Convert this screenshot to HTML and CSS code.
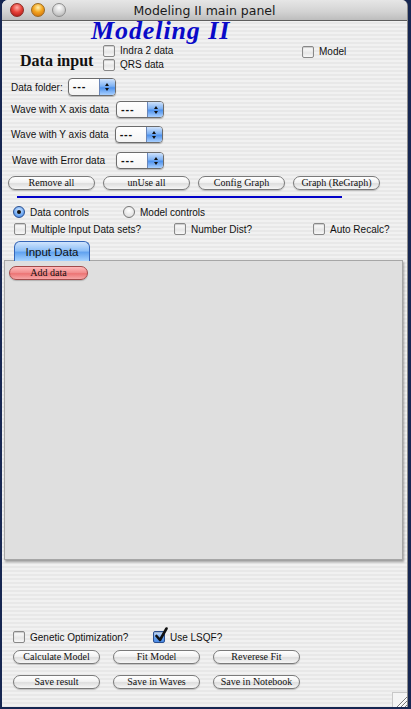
FILE: index.html
```html
<!DOCTYPE html>
<html>
<head>
<meta charset="utf-8">
<title>Modeling II main panel</title>
<link rel="stylesheet" href="styles.css">
</head>
<body>
<div class="win">
  <div class="titlebar">
    <div class="lights">
      <span class="light red"></span>
      <span class="light yellow"></span>
      <span class="light gray"></span>
    </div>
    <div class="title">Modeling II main panel</div>
  </div>

  <div class="content">
    <div class="heading">Modeling II</div>

    <div class="data-input">
      <div class="di-label">Data input</div>
      <div class="di-checks">
        <div class="cb"><span class="box"></span><span>Indra 2 data</span></div>
        <div class="cb"><span class="box"></span><span>QRS data</span></div>
      </div>
      <div class="cb model"><span class="box"></span><span>Model</span></div>
    </div>

    <div class="prow folder">
      <span class="plabel">Data folder:</span>
      <div class="popup"><span class="ptext">---</span><span class="parrows"><i class="up"></i><i class="down"></i></span></div>
    </div>
    <div class="prow xrow">
      <span class="plabel">Wave with X axis data</span>
      <div class="popup"><span class="ptext">---</span><span class="parrows"><i class="up"></i><i class="down"></i></span></div>
    </div>
    <div class="prow yrow">
      <span class="plabel">Wave with Y axis data</span>
      <div class="popup"><span class="ptext">---</span><span class="parrows"><i class="up"></i><i class="down"></i></span></div>
    </div>
    <div class="prow erow">
      <span class="plabel">Wave with Error data</span>
      <div class="popup"><span class="ptext">---</span><span class="parrows"><i class="up"></i><i class="down"></i></span></div>
    </div>

    <div class="btnrow top">
      <button class="btn">Remove all</button>
      <button class="btn">unUse all</button>
      <button class="btn">Config Graph</button>
      <button class="btn">Graph (ReGraph)</button>
    </div>

    <div class="rule"></div>

    <div class="radiorow">
      <div class="rb data-ctl"><span class="radio on"></span><span>Data controls</span></div>
      <div class="rb"><span class="radio"></span><span>Model controls</span></div>
    </div>

    <div class="optrow">
      <div class="cb multi"><span class="box"></span><span>Multiple Input Data sets?</span></div>
      <div class="cb numdist"><span class="box"></span><span>Number Dist?</span></div>
      <div class="cb"><span class="box"></span><span>Auto Recalc?</span></div>
    </div>

    <div class="tabs">
      <div class="tab">Input Data</div>
    </div>
    <div class="panel">
      <button class="btn red">Add data</button>
    </div>

    <div class="bottomchecks">
      <div class="cb genetic"><span class="box"></span><span>Genetic Optimization?</span></div>
      <div class="cb"><span class="box checked"><svg viewBox="0 0 14 16" width="14" height="16"><path d="M2.5 9 L6 13 L12.5 1.5" fill="none" stroke="#111" stroke-width="2.6" stroke-linecap="round" stroke-linejoin="round"/></svg></span><span>Use LSQF?</span></div>
    </div>

    <div class="btnrow b1">
      <button class="btn">Calculate Model</button>
      <button class="btn">Fit Model</button>
      <button class="btn">Reverese Fit</button>
    </div>
    <div class="btnrow b2">
      <button class="btn">Save result</button>
      <button class="btn">Save in Waves</button>
      <button class="btn">Save in Notebook</button>
    </div>
  </div>

  <div class="grip">
    <svg viewBox="0 0 15 15" width="15" height="15">
      <path d="M4 14 L14 4 M8 14 L14 8 M12 14 L14 12" stroke="#777" stroke-width="1"/>
      <path d="M5 14 L14 5 M9 14 L14 9" stroke="#fff" stroke-width="1"/>
    </svg>
  </div>
</div>
</body>
</html>
```

FILE: styles.css
```css
* { box-sizing: border-box; }
html, body { margin: 0; padding: 0; }
body {
  width: 411px;
  height: 709px;
  background: #172752;
  overflow: hidden;
  font-family: "Liberation Sans", Arial, sans-serif;
}
.win {
  position: relative;
  width: 406px;
  height: 707px;
  margin-left: 2px;
  border-radius: 6px 6px 0 0;
  overflow: hidden;
  background: repeating-linear-gradient(#f1f1f1 0 2px, #e8e8e8 2px 4px);
  border-right: 1px solid #8c8c8c;
}
.titlebar {
  height: 21px;
  display: flex;
  align-items: center;
  background: linear-gradient(#e6e6e6, #d2d2d2 60%, #bdbdbd);
  border-bottom: 1px solid #5e5e5e;
  position: relative;
}
.lights { display: flex; gap: 7px; padding-left: 8px; }
.light {
  width: 14px; height: 14px; border-radius: 50%;
  border: 1px solid #7a7a7a;
}
.light.red { background: radial-gradient(circle at 50% 30%, #ffb0a8 0, #e8433a 45%, #a01010 100%); border-color: #8a2a22; }
.light.yellow { background: radial-gradient(circle at 50% 30%, #fff2b0 0, #f3a51e 45%, #c8620a 100%); border-color: #9a6a20; }
.light.gray { background: radial-gradient(circle at 50% 30%, #ffffff 0, #d6d6d6 50%, #a8a8a8 100%); border-color: #8c8c8c; }
.title {
  position: absolute; left: 0; right: 0; top: 3px;
  text-align: center;
  font-family: "DejaVu Sans", sans-serif;
  font-size: 12.5px;
  color: #1a1a1a;
}
.content { font-size: 10px; color: #111; }
.cb, .rb, .plabel, .btn, .tab { white-space: nowrap; }
.heading {
  height: 23px;
  padding-left: 89px;
  font-family: "Liberation Serif", serif;
  font-weight: bold;
  font-style: italic;
  font-size: 26px;
  line-height: 20px;
  letter-spacing: 0.9px;
  color: #0a0ac8;
}
.data-input { height: 28px; display: flex; align-items: flex-start; }
.di-label {
  margin-left: 18px; margin-top: 8px;
  font-family: "Liberation Serif", serif; font-weight: bold; font-size: 16px;
  width: 83px; flex: none; white-space: nowrap;
}
.di-checks { display: flex; flex-direction: column; gap: 3px; margin-top: 1px; width: 199px; flex: none; }
.cb { display: flex; align-items: center; gap: 5px; height: 11px; font-size: 10px; flex: none; }
.box {
  width: 12px; height: 12px; flex: none;
  border: 1px solid #888; border-radius: 2px;
  background: linear-gradient(#fefefe, #e6e6e6 60%, #f8f8f8);
  box-shadow: inset 0 1px 1px rgba(0,0,0,0.2);
  position: relative;
}
.cb.model { margin-top: 2px; }
.prow { display: flex; align-items: center; padding-left: 9px; }
.prow.folder { margin-top: 6px; height: 18px; }
.prow.xrow { margin-top: 5px; height: 17px; }
.prow.yrow { margin-top: 8px; height: 17px; }
.prow.erow { margin-top: 9px; height: 17px; padding-left: 10px; }
.plabel { font-size: 10px; }
.folder .popup { margin-left: 5px; height: 18px; }
.xrow .popup { margin-left: 7px; }
.yrow .popup { margin-left: 6px; }
.erow .popup { margin-left: 11px; }
.popup {
  display: flex; width: 48px; height: 17px; flex: none;
  border: 1px solid #6c6c6c; border-radius: 4px; overflow: hidden;
  background: linear-gradient(#fff, #f4f4f4);
  box-shadow: 0 1px 1px rgba(0,0,0,0.25);
}
.ptext { flex: 1; padding-left: 4px; font-size: 11px; font-weight: bold; line-height: 14px; letter-spacing: 0.8px; }
.parrows {
  width: 16px; display: flex; flex-direction: column; align-items: center; justify-content: center; gap: 2px;
  background: linear-gradient(#cfe2fb, #7eb2f4 45%, #4f92ec 55%, #a9d0ff);
  border-left: 1px solid #6a86b8;
}
.parrows i { width: 0; height: 0; border-left: 2.5px solid transparent; border-right: 2.5px solid transparent; }
.parrows .up { border-bottom: 3px solid #111; }
.parrows .down { border-top: 3px solid #111; }
.btnrow { display: flex; }
.btn {
  margin: 0; padding: 0; flex: none;
  width: 87px; height: 14px;
  border: 1px solid #7a7a7a; border-radius: 8px;
  background: linear-gradient(#ffffff, #f2f2f2 45%, #dedede 55%, #f6f6f6);
  box-shadow: 0 1px 1px rgba(0,0,0,0.2);
  font-family: "Liberation Serif", serif; font-size: 10px; line-height: 12px;
  color: #111;
}
.btnrow.top { margin-top: 7px; padding-left: 6px; gap: 8px; }
.rule { margin: 6px 0 0 15px; width: 325px; height: 2px; background: #0000c8; }
.radiorow { display: flex; align-items: center; margin-top: 8px; padding-left: 11px; height: 12px; }
.rb { display: flex; align-items: center; gap: 5px; font-size: 10px; flex: none; }
.rb.data-ctl { width: 110px; }
.radio {
  width: 12px; height: 12px; border-radius: 50%; border: 1px solid #777; flex: none;
  background: radial-gradient(circle at 50% 35%, #fff, #e2e2e2 70%, #c8c8c8);
  position: relative;
}
.radio.on {
  border-color: #2a4f90;
  background: radial-gradient(circle at 50% 35%, #d6e8ff, #6da8f2 60%, #3a78d8);
}
.radio.on::after {
  content: ""; position: absolute; left: 3px; top: 3px; width: 4px; height: 4px; border-radius: 50%; background: #111;
}
.optrow { display: flex; align-items: center; margin-top: 5px; padding-left: 12px; height: 12px; }
.cb.multi { width: 160px; }
.cb.numdist { width: 139px; }
.tabs { display: flex; padding-left: 12px; margin-top: 6px; }
.tab {
  width: 76px; height: 20px;
  border: 1px solid #3566b8; border-bottom: none;
  border-radius: 6px 6px 0 0;
  background: linear-gradient(#cfe4fd, #8fc0f7 45%, #62a3f0 55%, #a6d3ff);
  text-align: center; font-size: 11.5px; line-height: 20px; color: #111;
  position: relative; z-index: 1; margin-bottom: -1px;
}
.panel {
  margin-left: 2px; width: 399px; height: 300px;
  background: #dfdfdf;
  border: 1px solid #a6a6a6;
  box-shadow: 1px 2px 2px rgba(0,0,0,0.35);
  padding: 5px 0 0 4px;
}
.btn.red {
  width: 79px; height: 14px;
  border-color: #a24a4a;
  background: linear-gradient(#fbb, #f08a8a 50%, #ec7474 55%, #f6a6a6);
}
.bottomchecks { display: flex; align-items: center; margin-top: 71px; padding-left: 11px; height: 12px; }
.cb.genetic { width: 140px; }
.box.checked {
  border-color: #2a4f90;
  background: linear-gradient(#cde2ff, #6aa4f0 55%, #4a8ae6);
}
.box.checked svg { position: absolute; left: 0; top: -5px; }
.btnrow.b1 { margin-top: 7px; padding-left: 11px; gap: 13px; }
.btnrow.b2 { margin-top: 11px; padding-left: 11px; gap: 13px; }
.grip {
  position: absolute; right: 0; bottom: 0; width: 15px; height: 15px;
  background: #f4f4f4; border-left: 1px solid #c8c8c8; border-top: 1px solid #c8c8c8;
}
.grip svg { display: block; }
```
